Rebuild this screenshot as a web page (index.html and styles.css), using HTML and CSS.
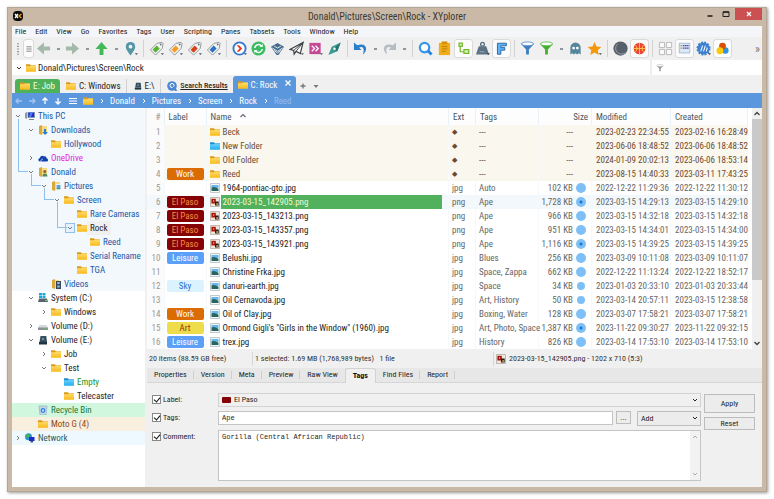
FILE: index.html
```html
<!DOCTYPE html>
<html lang="en">
<head>
<meta charset="utf-8">
<title>Donald\Pictures\Screen\Rock - XYplorer</title>
<link rel="stylesheet" href="styles.css">
</head>
<body>
<svg class="defs" aria-hidden="true">
  <defs>
    <linearGradient id="gold" x1="0" y1="0" x2="0" y2="1"><stop offset="0" stop-color="#ffdd72"/><stop offset="1" stop-color="#f9b916"/></linearGradient>
    <linearGradient id="sky" x1="0" y1="0" x2="0" y2="1"><stop offset="0" stop-color="#6fd2ff"/><stop offset="1" stop-color="#23aef3"/></linearGradient>
    <symbol id="folder" viewBox="0 0 10 10"><path d="M0 1.2h3.8l1 1H10V4H0z" fill="#dc9a1a"/><path d="M0 3.2h4l1-.8h5v6.4H0z" fill="url(#gold)"/></symbol>
    <symbol id="folder-blue" viewBox="0 0 10 10"><path d="M0 1.2h3.8l1 1H10V4H0z" fill="#1d8fd0"/><path d="M0 3.2h4l1-.8h5v6.4H0z" fill="url(#sky)"/></symbol>
    <symbol id="chev-down" viewBox="0 0 8 8"><path d="M2 3l2 2 2-2" fill="none" stroke="currentColor"/></symbol>
    <symbol id="chev-right" viewBox="0 0 8 8"><path d="M3 2l2 2-2 2" fill="none" stroke="currentColor"/></symbol>
    <symbol id="pc" viewBox="0 0 10 10"><path d="M0 2l2-1v7L0 7z" fill="#8d99a8"/><path d="M2.500 1H10v6H2.500z" fill="#9aa6b4"/><path d="M3.200 1.600h6v4.500h-6z" fill="#1a2fc0"/><path d="M5 1.600h3L6 6H4z" fill="#4f7af0"/><path d="M4 8h5v1H4z" fill="#7d8792"/></symbol>
    <symbol id="downloads" viewBox="0 0 10 10"><path d="M1 1l3-1v10L1 9z" fill="#dba93a"/><path d="M4 1h5v8H4z" fill="#f6d983"/><path d="M6 4h2v3h2L7 10 4.500 7H6z" fill="#1d83d8"/></symbol>
    <symbol id="user-folder" viewBox="0 0 10 10"><path d="M1 1l3-1v10L1 9z" fill="#dba93a"/><path d="M4 1h5v8H4z" fill="#f6d983"/><circle cx="6.800" cy="4.500" r="1.600" fill="#8c6a3c"/><path d="M4.500 9.500q0-3 2.400-3t2.600 3z" fill="#4d8a63"/></symbol>
    <symbol id="pictures" viewBox="0 0 10 10"><path d="M1 1l3-1v10L1 9z" fill="#dba93a"/><path d="M4 1h5v8H4z" fill="#f6d983"/><path d="M5 3h5v6H5z" fill="#e8f4fb"/><path d="M5.600 4h3.800v3H5.600z" fill="#5aa5dc"/><path d="M5.600 7h3.800v1.200H5.600z" fill="#5d8f5a"/></symbol>
    <symbol id="videos" viewBox="0 0 10 10"><path d="M1 1l3-1v10L1 9z" fill="#dba93a"/><path d="M4 1h4v8H4z" fill="#f6d983"/><path d="M5 2h5v8H5z" fill="#39495e"/><path d="M6.300 3h2.400v2H6.300zm0 3.500h2.400v2H6.300z" fill="#8cc3e8"/></symbol>
    <symbol id="cloud" viewBox="0 0 10 10"><path d="M1.500 8.500C-.5 7.500.5 5 2 5c.3-2 2.500-3 4-1.500C7.600 3 8.500 4 8.500 5.200 10.500 5.500 10.400 8.500 9 8.500z" fill="#1243ac"/><path d="M3.500 9C2 8 3.500 6 4.800 6.200" fill="none" stroke="#f3f8fd" stroke-width=".7"/></symbol>
    <symbol id="drive-c" viewBox="0 0 10 10"><path d="M1 0h3v2.200H1zm3.500 0h3v2.200h-3zM1 2.700h3v2.200H1zm3.500 0h3v2.200h-3z" fill="#19a9dd"/><path d="M1 5.500h8l1 3.500H0z" fill="#56636c"/><path d="M7 7h2v1H7z" fill="#6fd85a"/></symbol>
    <symbol id="drive" viewBox="0 0 10 10"><path d="M1.500 4h7L10 7H0z" fill="#d5d9dc"/><path d="M0 6.500h10V9H0z" fill="#8b9297"/><path d="M7 7.300h2v1H7z" fill="#5dcc48"/></symbol>
    <symbol id="usb" viewBox="0 0 10 10"><path d="M2.500 1h5.800L9 7H1.500z" fill="#36505f"/><path d="M1 7h8v2.500H1z" fill="#1d3442"/><path d="M4 3h2v2H4z" fill="#77909e"/></symbol>
    <symbol id="bin" viewBox="0 0 10 10"><path d="M1 1h8L8 10H2z" fill="#c4d9e8" stroke="#8ba6ba" stroke-width=".6"/><circle cx="5" cy="5.500" r="1.800" fill="none" stroke="#2a7fe0" stroke-width="1.200"/></symbol>
    <symbol id="network" viewBox="0 0 10 10"><circle cx="3.500" cy="3.800" r="3.500" fill="#2c93cf"/><path d="M1 2q2-2 3 0T2 5z" fill="#47b64c"/><path d="M4 4h5.500v4H4z" fill="#1d2fc2"/><path d="M5.500 8h2.500v1.500H5.500z" fill="#45546b"/></symbol>
    <symbol id="jpg" viewBox="0 0 10 10"><path d="M.5.500h9v9h-9z" fill="#f4f6f7" stroke="#b4bcc3" stroke-width=".8"/><path d="M1.500 2h7v3h-7z" fill="#6ab8ea"/><path d="M1.500 4.500q3-1.500 7 1.200V8h-7z" fill="#27665f"/></symbol>
    <symbol id="png" viewBox="0 0 10 10"><path d="M.5.500h9v9h-9z" fill="#eee6da" stroke="#b4aaa0" stroke-width=".8"/><path d="M1.400 1.800h4.400v4.700H1.400z" fill="#ab1210"/><path d="M5 4.500h3.700v4H5z" fill="#23202a"/><path d="M3 3.300h1.200v1.400H3zm3.300 3h1.700v1.500H6.300z" fill="#f4b41c"/></symbol>
    <symbol id="tag" viewBox="0 0 16 16"><path d="M8.500 2.500L14 1.500l1 1-1 5.500-7 7-5.500-5.500z" fill="#f4f5f5" stroke="#8b9196"/><path d="M8.200 4.800l3.200 3.200-4.400 4.400-3.200-3.200z" fill="currentColor"/><circle cx="12.500" cy="3.700" r="1" fill="#6d7478"/><path d="M12.500 13h3.500l-1.700 2z" fill="#4d5b68"/></symbol>
    <symbol id="funnel" viewBox="0 0 16 16"><path d="M1 3h14l-5.500 6v5.500h-3V9z" fill="currentColor"/><ellipse cx="8" cy="3" rx="6.500" ry="2" fill="#fff" stroke="currentColor" stroke-width=".8"/></symbol>
    <symbol id="arrow-left" viewBox="0 0 16 16"><path d="M1 8l7.500-6.500v4.400H15v4.200H8.500v4.400z" fill="currentColor"/></symbol>
    <symbol id="thin-arrow" viewBox="0 0 10 10"><path d="M8 5H2M4.500 2.500L2 5l2.500 2.500" fill="none" stroke="currentColor" stroke-width="1.300"/></symbol>
  </defs>
</svg>

<div class="window">
  <header class="titlebar">
    <svg class="app" viewBox="0 0 12 10"><rect x="1" y="0" width="10" height="10" rx="4" fill="#090909"/><path d="M3 3l3 4M6 3L3 7" stroke="#fff" stroke-width="1.400"/><path d="M9.500 3L7 5l2.500 2" fill="none" stroke="#f6a11c" stroke-width="1.300"/></svg>
    <h1>Donald\Pictures\Screen\Rock - XYplorer</h1>
    <div class="caption">
      <button aria-label="Minimize"><svg viewBox="0 0 8 8"><path d="M1.500 6h5" stroke="#222" stroke-width="1.600"/></svg></button>
      <button aria-label="Maximize"><svg viewBox="0 0 8 8"><path d="M1 2h6v4.500H1z" fill="none" stroke="#222"/><path d="M1 2h6" stroke="#222" stroke-width="1.500"/></svg></button>
      <button class="close" aria-label="Close"><svg viewBox="0 0 8 8"><path d="M2 2l4 4M6 2L2 6" stroke="#fff" stroke-width="1.200"/></svg></button>
    </div>
  </header>

  <nav class="menu" aria-label="Menu">
    <button>File</button><button>Edit</button><button>View</button><button>Go</button><button>Favorites</button><button>Tags</button><button>User</button><button>Scripting</button><button>Panes</button><button>Tabsets</button><button>Tools</button><button>Window</button><button>Help</button>
  </nav>

  <div class="toolbar" role="toolbar" aria-label="Tools">
    <svg class="grip" viewBox="0 0 4 16"><path d="M1 2h2M1 5h2M1 8h2M1 11h2M1 14h2" stroke="#8a8a8a" stroke-width="1.200"/></svg>
    <button class="slim on" aria-label="Toolbar menu"><svg viewBox="0 0 8 16"><path d="M1 5.500h6M1 8h6M1 10.500h6" stroke="#7a7a7a"/></svg></button>
    <button class="tool sage" aria-label="Back"><svg><use href="#arrow-left"/></svg></button>
    <button class="drop" aria-label="Back history"></button>
    <button class="tool sage flip" aria-label="Forward"><svg><use href="#arrow-left"/></svg></button>
    <button class="drop" aria-label="Forward history"></button>
    <button class="tool green up" aria-label="Up"><svg><use href="#arrow-left"/></svg></button>
    <button class="drop" aria-label="Up history"></button>
    <button class="tool" aria-label="Hotlist"><svg viewBox="0 0 16 16"><path d="M8 15.500C4 10 3 8 3 6a5 5 0 0 1 10 0c0 2-1 4-5 9.500z" fill="#5595a5"/><circle cx="8" cy="6" r="2" fill="#f0f0f0"/><path d="M12.500 13H16l-1.700 2z" fill="#4d5b68"/></svg></button>
    <i class="sep"></i>
    <button class="tool tag-green" aria-label="Green tag"><svg><use href="#tag"/></svg></button>
    <button class="tool tag-orange" aria-label="Orange tag"><svg><use href="#tag"/></svg></button>
    <button class="tool tag-red" aria-label="Red tag"><svg><use href="#tag"/></svg></button>
    <button class="tool tag-blue" aria-label="Blue tag"><svg><use href="#tag"/></svg></button>
    <i class="sep"></i>
    <button class="tool" aria-label="Go to"><svg viewBox="0 0 16 16"><circle cx="8" cy="8" r="6.500" fill="#fff" stroke="#3779d0" stroke-width="2"/><path d="M5 4.500h2.500L11 8l-3.500 3.500H5L8 8z" fill="#ee382b"/><path d="M12.500 13H16l-1.700 2z" fill="#3f5668"/></svg></button>
    <button class="tool" aria-label="Refresh"><svg viewBox="0 0 16 16"><circle cx="8" cy="8" r="7.500" fill="#39bd62"/><path d="M4 7.500a4 4 0 0 1 7-2.300M12 8.500a4 4 0 0 1-7 2.300" fill="none" stroke="#fff" stroke-width="1.600"/><path d="M12.500 3v3.500H9zM3.500 13V9.500H7z" fill="#fff"/></svg></button>
    <button class="tool" aria-label="Layers"><svg viewBox="0 0 16 16"><path d="M1 6l7-4 7 4-6 9-2 0z" fill="#466b8d"/><path d="M2.500 7.500L8 11l5.500-3.500M4 10l4 2.700 4-2.700M4.500 5.500l3.500 2 3.500-2" fill="none" stroke="#fff" stroke-width=".9"/></svg></button>
    <button class="tool" aria-label="Send to"><svg viewBox="0 0 16 16"><path d="M1 9L15 1.500 12 13.500 7.500 11 5.500 14 5 10z" fill="#fff" stroke="#3c4145" stroke-width="1.300"/><path d="M5 10l10-8.500L7.500 11" fill="none" stroke="#3c4145"/><path d="M12.500 13H16l-1.700 2z" fill="#4d5b68"/></svg></button>
    <button class="tool" aria-label="Run script"><svg viewBox="0 0 16 16"><path d="M1.500 2h12v12h-12z" fill="#c44a96"/><path d="M4 5l3 3-3 3M8 5l3 3-3 3" fill="none" stroke="#fff" stroke-width="1.400"/><path d="M12.500 13H16l-1.700 2z" fill="#4d5b68"/></svg></button>
    <button class="tool" aria-label="Navigate"><svg viewBox="0 0 16 16"><path d="M14.500 1.500L11 11 1.500 15 5 6z" fill="#3d9a92"/><path d="M14.500 1.500L11 11 7 8z" fill="#28746f"/><circle cx="8" cy="8.300" r="1.300" fill="#fff"/></svg></button>
    <i class="sep"></i>
    <button class="tool" aria-label="Undo"><svg viewBox="0 0 16 16"><path d="M1 1.500v8h8L6.500 7C10 5 13 7.500 10.500 14.500 17 9 14 1 4.500 4.500z" fill="#2b7fca"/></svg></button>
    <button class="drop" aria-label="Undo history"></button>
    <button class="tool flip" aria-label="Redo"><svg viewBox="0 0 16 16"><path d="M1 1.500v8h8L6.500 7C10 5 13 7.500 10.500 14.500 17 9 14 1 4.500 4.500z" fill="#b4bdc4"/></svg></button>
    <button class="drop" aria-label="Redo history"></button>
    <i class="sep"></i>
    <button class="tool" aria-label="Find"><svg viewBox="0 0 16 16"><circle cx="7" cy="7" r="5" fill="#fff" stroke="#3596ea" stroke-width="2.400"/><path d="M10.500 10.500l4 4" stroke="#2b83dc" stroke-width="3"/></svg></button>
    <button class="tool" aria-label="Paste"><svg viewBox="0 0 16 16"><path d="M2 2h12v13H2z" fill="#f2ae16"/><path d="M5 .500h6v3H5z" fill="#d58d0c"/><path d="M5 6h6M5 8.500h6M5 11h4" stroke="#b97a0c"/></svg></button>
    <button class="tool on" aria-label="Tree"><svg viewBox="0 0 16 16"><path d="M4 6v6h5" fill="none" stroke="#74b82d" stroke-width="1.500"/><path d="M2.500 1.500h4v4h-4zM8.500 9.500h6v4.500h-6z" fill="#d8f0b8" stroke="#74b82d" stroke-width="1.500"/></svg></button>
    <button class="tool" aria-label="Weight"><svg viewBox="0 0 16 16"><circle cx="8" cy="3.500" r="2" fill="none" stroke="#566b7b" stroke-width="1.400"/><path d="M4 5.500h8l3 9H1z" fill="#5d7384"/><path d="M5 11.500h5" stroke="#9fb0bc"/><path d="M12.500 13H16l-1.700 2z" fill="#34424e"/></svg></button>
    <button class="tool on" aria-label="Font filter"><svg viewBox="0 0 16 16"><path d="M3 1.500h11v3.200H7.200v2.200H12V10H7.200v5H3z" fill="#5fb4f5" stroke="#245f9e" stroke-width="1.100"/></svg></button>
    <i class="sep"></i>
    <button class="tool funnel-blue" aria-label="Filter"><svg><use href="#funnel"/></svg></button>
    <button class="tool funnel-green" aria-label="Visual filter"><svg><use href="#funnel"/></svg></button>
    <button class="drop" aria-label="Filter list"></button>
    <button class="tool" aria-label="Ghost filter"><svg viewBox="0 0 16 16"><path d="M2.500 14.500V7a5.500 5.500 0 0 1 11 0v7.500l-2-1.500-1.700 1.500L8 13l-1.800 1.500L4.500 13z" fill="#55869b"/><circle cx="6" cy="7.500" r="1.500" fill="#fff"/><circle cx="10" cy="7.500" r="1.500" fill="#fff"/></svg></button>
    <button class="tool" aria-label="Favorites"><svg viewBox="0 0 16 16"><path d="M8 1l2.100 4.800 5.200.5-3.900 3.500 1.100 5.100L8 12.200l-4.500 2.700 1.100-5.100L.7 6.300l5.200-.5z" fill="#f59709"/><path d="M12.500 13H16l-1.700 2z" fill="#4d5b68"/></svg></button>
    <i class="sep"></i>
    <button class="tool" aria-label="Dark mode"><svg viewBox="0 0 16 16"><circle cx="8" cy="8" r="7.600" fill="#56616c"/><path d="M5 3A6.200 6.200 0 0 0 13 12.500" fill="none" stroke="#aab2b9" stroke-width=".8"/></svg></button>
    <button class="tool on" aria-label="Dribble"><svg viewBox="0 0 16 16"><circle cx="8" cy="8" r="7.200" fill="#e8482f"/><path d="M8 1v14M1 8h14M3 4q4 4 0 8M13 4q-4 4 0 8" fill="none" stroke="#ffc14a" stroke-width="1.200"/></svg></button>
    <i class="sep"></i>
    <button class="tool" aria-label="Dual pane"><svg viewBox="0 0 16 16"><path d="M1.500 1.500h5.500v5.500H1.500zM9 1.500h5.500v5.500H9zM1.500 9h5.500v5.500H1.500zM9 9h5.500v5.500H9z" fill="#fafafa" stroke="#b8b8b8"/></svg></button>
    <button class="tool on" aria-label="Details"><svg viewBox="0 0 16 16"><path d="M1.500 1.500h13v12h-13z" fill="#dbe8f8" stroke="#9ab0cc"/><path d="M3 4.500h2M3 7.500h2" stroke="#c79b35" stroke-width="1.500"/><path d="M6 4.500h7M6 7.500h7" stroke="#4547a2" stroke-width="1.500" stroke-dasharray="2 .6"/></svg></button>
    <button class="tool" aria-label="Badge"><svg viewBox="0 0 16 16"><circle cx="8" cy="8" r="6.500" fill="#3c81cf" stroke="#3c81cf" stroke-width="2" stroke-dasharray="2 1.400"/><path d="M5 11l2-6M8 11l2-6M11 11l1-4" stroke="#fff" stroke-width="1.100"/><path d="M12.500 13H16l-1.700 2z" fill="#34424e"/></svg></button>
    <button class="tool on" aria-label="Colors"><svg viewBox="0 0 16 16"><circle cx="11.500" cy="10.500" r="4" fill="#2a94dc"/><circle cx="8" cy="5" r="4.200" fill="#d64d08"/><circle cx="4.800" cy="10.800" r="4.200" fill="#fdc80a"/></svg></button>
    <button class="more" aria-label="More">»</button>
  </div>

  <div class="address">
    <button aria-label="Address history"><svg class="i8"><use href="#chev-down"/></svg></button>
    <svg class="i10"><use href="#folder"/></svg>
    <input class="path" aria-label="Address" value="Donald\Pictures\Screen\Rock">
    <label class="live"><svg class="i8"><use href="#funnel"/></svg><input aria-label="Live filter"></label>
  </div>

  <div class="tabs">
    <button class="tab job"><svg class="i10"><use href="#folder"/></svg>E: Job</button>
    <button class="tab"><svg class="i10"><use href="#folder"/></svg>C: Windows</button>
    <button class="tab drive"><svg class="i8"><use href="#usb"/></svg>E:\</button>
    <button class="tab search"><svg class="i10" viewBox="0 0 10 10"><circle cx="5" cy="5" r="4.800" fill="#4a88d3"/><circle cx="5" cy="4.500" r="2" fill="none" stroke="#fff"/><path d="M6 6l3.500 4" stroke="#4a88d3" stroke-width="2"/></svg><span>Search Results</span></button>
    <button class="tab current"><svg class="i10"><use href="#folder"/></svg>C: Rock<svg class="x" viewBox="0 0 8 8"><path d="M1.500 1.500l5 5M6.500 1.500l-5 5" stroke="#fff" stroke-width="1.300"/></svg></button>
    <button class="plain" aria-label="New tab"><svg class="i8" viewBox="0 0 8 8"><path d="M4 1.500v5M1.500 4h5" stroke="#777" stroke-width="1.300"/></svg></button>
    <button class="plain" aria-label="Tab list"><svg class="i8" viewBox="0 0 8 8"><path d="M1.500 3h5L4 6z" fill="#777"/></svg></button>
  </div>

  <nav class="crumbs" aria-label="Breadcrumb">
    <button class="dim" aria-label="Back"><svg class="i10"><use href="#thin-arrow"/></svg></button>
    <button class="dim flip" aria-label="Forward"><svg class="i10"><use href="#thin-arrow"/></svg></button>
    <button class="up" aria-label="Up"><svg class="i10"><use href="#thin-arrow"/></svg></button>
    <button class="down" aria-label="Down"><svg class="i10"><use href="#thin-arrow"/></svg></button>
    <button class="burger" aria-label="Menu"><svg class="i8" viewBox="0 0 8 8"><path d="M0 1.500h8M0 4h8M0 6.500h8" stroke="#fff"/></svg></button>
    <svg class="i10"><use href="#folder"/></svg>
    <svg class="next"><use href="#chev-right"/></svg><a href="#">Donald</a>
    <svg class="next"><use href="#chev-right"/></svg><a href="#">Pictures</a>
    <svg class="next"><use href="#chev-right"/></svg><a href="#">Screen</a>
    <svg class="next"><use href="#chev-right"/></svg><a href="#">Rock</a>
    <svg class="next"><use href="#chev-right"/></svg><a class="faint" href="#">Reed</a>
  </nav>

  <div class="main">
    <ul class="tree">
      <li class="b"><svg class="c"><use href="#chev-down"/></svg><svg class="i10"><use href="#pc"/></svg>This PC</li>
      <li class="b d1"><svg class="c"><use href="#chev-down"/></svg><svg class="i10"><use href="#downloads"/></svg>Downloads</li>
      <li class="b d2"><i class="c"></i><svg class="i10"><use href="#folder"/></svg>Hollywood</li>
      <li class="b d1 magenta"><svg class="c"><use href="#chev-right"/></svg><svg class="i10"><use href="#cloud"/></svg>OneDrive</li>
      <li class="b d1 link4"><svg class="c"><use href="#chev-down"/></svg><svg class="i10"><use href="#user-folder"/></svg>Donald</li>
      <li class="b d2 link1"><svg class="c"><use href="#chev-down"/></svg><svg class="i10"><use href="#pictures"/></svg>Pictures</li>
      <li class="b d3 link1"><svg class="c"><use href="#chev-down"/></svg><svg class="i10"><use href="#folder"/></svg>Screen</li>
      <li class="b d4"><i class="c"></i><svg class="i10"><use href="#folder"/></svg>Rare Cameras</li>
      <li class="b d4 link2 here"><svg class="c"><use href="#chev-down"/></svg><svg class="i10"><use href="#folder"/></svg><span>Rock</span></li>
      <li class="b d5"><i class="c"></i><svg class="i10"><use href="#folder"/></svg>Reed</li>
      <li class="b d4"><i class="c"></i><svg class="i10"><use href="#folder"/></svg>Serial Rename</li>
      <li class="b d4"><i class="c"></i><svg class="i10"><use href="#folder"/></svg>TGA</li>
      <li class="b d2"><i class="c"></i><svg class="i10"><use href="#videos"/></svg>Videos</li>
      <li class="d1"><svg class="c"><use href="#chev-down"/></svg><svg class="i10"><use href="#drive-c"/></svg>System (C:)</li>
      <li class="d2"><svg class="c"><use href="#chev-right"/></svg><svg class="i10"><use href="#folder"/></svg>Windows</li>
      <li class="d1"><svg class="c"><use href="#chev-right"/></svg><svg class="i10"><use href="#drive"/></svg>Volume (D:)</li>
      <li class="d1"><svg class="c"><use href="#chev-down"/></svg><svg class="i10"><use href="#usb"/></svg>Volume (E:)</li>
      <li class="d2"><svg class="c"><use href="#chev-right"/></svg><svg class="i10"><use href="#folder"/></svg>Job</li>
      <li class="d2"><svg class="c"><use href="#chev-down"/></svg><svg class="i10"><use href="#folder"/></svg>Test</li>
      <li class="d3 lime"><i class="c"></i><svg class="i10"><use href="#folder-blue"/></svg>Empty</li>
      <li class="d3"><i class="c"></i><svg class="i10"><use href="#folder"/></svg>Telecaster</li>
      <li class="d1 recycle"><i class="c"></i><svg class="i10"><use href="#bin"/></svg>Recycle Bin</li>
      <li class="d1 moto"><i class="c"></i><svg class="i10"><use href="#folder"/></svg>Moto G (4)</li>
      <li class="net"><svg class="c"><use href="#chev-right"/></svg><svg class="i10"><use href="#network"/></svg>Network</li>
    </ul>

    <section class="work">
      <div class="list">
        <table>
          <colgroup><col class="w-num"><col class="w-label"><col><col class="w-ext"><col class="w-tags"><col class="w-size"><col class="w-mod"><col class="w-cre"></colgroup>
          <thead><tr><th class="num">#</th><th>Label</th><th>Name <svg class="i8 sort" viewBox="0 0 8 8"><path d="M1.500 5L4 2.500 6.500 5" fill="none" stroke="#667" stroke-width="1.200"/></svg></th><th>Ext</th><th>Tags</th><th class="size">Size</th><th>Modified</th><th>Created</th></tr></thead>
          <tbody>
            <tr class="dir"><td class="num">1</td><td></td><td class="name"><svg><use href="#folder"/></svg><span>Beck</span></td><td class="mark">◆</td><td>---</td><td class="size">---<i></i></td><td class="date">2023-02-23 22:34:55</td><td class="date">2023-02-16 16:28:49</td></tr>
            <tr class="dir"><td class="num">2</td><td></td><td class="name"><svg><use href="#folder-blue"/></svg><span>New Folder</span></td><td class="mark">◆</td><td>---</td><td class="size">---<i></i></td><td class="date">2023-06-06 18:48:52</td><td class="date">2023-06-06 18:48:52</td></tr>
            <tr class="dir"><td class="num">3</td><td></td><td class="name"><svg><use href="#folder"/></svg><span>Old Folder</span></td><td class="mark">◆</td><td>---</td><td class="size">---<i></i></td><td class="date">2024-01-09 20:02:13</td><td class="date">2023-06-06 18:53:14</td></tr>
            <tr class="dir"><td class="num">4</td><td><b class="pill work-p">Work</b></td><td class="name"><svg><use href="#folder"/></svg><span>Reed</span></td><td class="mark">◆</td><td>---</td><td class="size">---<i></i></td><td class="date">2023-08-15 14:40:33</td><td class="date">2023-03-11 17:43:25</td></tr>
            <tr><td class="num">5</td><td></td><td class="name"><svg><use href="#jpg"/></svg><span>1964-pontiac-gto.jpg</span></td><td>jpg</td><td>Auto</td><td class="size">102 KB<i class="dot"></i></td><td class="date">2022-12-22 11:29:36</td><td class="date">2022-12-22 11:30:12</td></tr>
            <tr class="sel"><td class="num">6</td><td><b class="pill paso">El Paso</b></td><td class="name"><svg><use href="#png"/></svg><span>2023-03-15_142905.png</span></td><td>png</td><td>Ape</td><td class="size">1,728 KB<i class="dot big"></i></td><td class="date">2023-03-15 14:29:13</td><td class="date">2023-03-15 14:29:10</td></tr>
            <tr><td class="num">7</td><td><b class="pill paso">El Paso</b></td><td class="name"><svg><use href="#png"/></svg><span>2023-03-15_143213.png</span></td><td>png</td><td>Ape</td><td class="size">966 KB<i class="dot"></i></td><td class="date">2023-03-15 14:32:18</td><td class="date">2023-03-15 14:32:18</td></tr>
            <tr><td class="num">8</td><td><b class="pill paso">El Paso</b></td><td class="name"><svg><use href="#png"/></svg><span>2023-03-15_143357.png</span></td><td>png</td><td>Ape</td><td class="size">951 KB<i class="dot"></i></td><td class="date">2023-03-15 14:34:01</td><td class="date">2023-03-15 14:34:00</td></tr>
            <tr><td class="num">9</td><td><b class="pill paso">El Paso</b></td><td class="name"><svg><use href="#png"/></svg><span>2023-03-15_143921.png</span></td><td>png</td><td>Ape</td><td class="size">1,116 KB<i class="dot big"></i></td><td class="date">2023-03-15 14:39:25</td><td class="date">2023-03-15 14:39:25</td></tr>
            <tr><td class="num">10</td><td><b class="pill leisure">Leisure</b></td><td class="name"><svg><use href="#jpg"/></svg><span>Belushi.jpg</span></td><td>jpg</td><td>Blues</td><td class="size">256 KB<i class="dot"></i></td><td class="date">2023-03-09 10:11:08</td><td class="date">2023-03-09 10:11:07</td></tr>
            <tr><td class="num">11</td><td></td><td class="name"><svg><use href="#jpg"/></svg><span>Christine Frka.jpg</span></td><td>jpg</td><td>Space, Zappa</td><td class="size">662 KB<i class="dot"></i></td><td class="date">2022-12-22 11:13:24</td><td class="date">2022-12-22 18:52:17</td></tr>
            <tr><td class="num">12</td><td><b class="pill sky">Sky</b></td><td class="name"><svg><use href="#jpg"/></svg><span>danuri-earth.jpg</span></td><td>jpg</td><td>Space</td><td class="size">34 KB<i class="dot small"></i></td><td class="date">2023-01-03 20:33:10</td><td class="date">2023-01-03 20:33:44</td></tr>
            <tr><td class="num">13</td><td></td><td class="name"><svg><use href="#jpg"/></svg><span>Oil Cernavoda.jpg</span></td><td>jpg</td><td>Art, History</td><td class="size">50 KB<i class="dot small"></i></td><td class="date">2023-03-14 20:57:11</td><td class="date">2023-03-15 12:38:58</td></tr>
            <tr><td class="num">14</td><td><b class="pill work-p">Work</b></td><td class="name"><svg><use href="#jpg"/></svg><span>Oil of Clay.jpg</span></td><td>jpg</td><td>Boxing, Water</td><td class="size">128 KB<i class="dot"></i></td><td class="date">2023-03-07 17:58:21</td><td class="date">2023-03-07 17:58:21</td></tr>
            <tr><td class="num">15</td><td><b class="pill art">Art</b></td><td class="name"><svg><use href="#jpg"/></svg><span>Ormond Gigli's "Girls in the Window" (1960).jpg</span></td><td>jpg</td><td>Art, Photo, Space</td><td class="size">1,387 KB<i class="dot big"></i></td><td class="date">2023-11-22 09:30:27</td><td class="date">2023-11-22 09:32:15</td></tr>
            <tr><td class="num">16</td><td><b class="pill leisure">Leisure</b></td><td class="name"><svg><use href="#jpg"/></svg><span>trex.jpg</span></td><td>jpg</td><td>History</td><td class="size">826 KB<i class="dot"></i></td><td class="date">2023-03-14 17:53:10</td><td class="date">2023-03-14 17:53:10</td></tr>
          </tbody>
        </table>
        <div class="scroll"><svg class="rot" viewBox="0 0 8 8"><path d="M1.500 3L4 5.500 6.500 3" fill="none" stroke="#444" stroke-width="1.400"/></svg><i></i><svg viewBox="0 0 8 8"><path d="M1.500 3L4 5.500 6.500 3" fill="none" stroke="#444" stroke-width="1.400"/></svg></div>
      </div>

      <footer class="status">
        <span class="s1">20 items (88.59 GB free)</span>
        <span class="s2">1 selected: 1.69 MB (1,768,989 bytes) &nbsp; 1 file</span>
        <span class="s3"><svg class="i10"><use href="#png"/></svg>2023-03-15_142905.png - 1202 x 710 (5:3)</span>
      </footer>

      <div class="ptabs">
        <button>Properties</button><button>Version</button><button>Meta</button><button>Preview</button><button class="last">Raw View</button><button class="active">Tags</button><button>Find Files</button><button>Report</button>
      </div>

      <form class="panel">
        <label class="check r1"><input type="checkbox" checked>Label:</label>
        <div class="combo r1"><i class="swatch"></i><select aria-label="Label value"><option>El Paso</option></select><svg class="i8"><use href="#chev-down"/></svg></div>
        <label class="check r2"><input type="checkbox" checked>Tags:</label>
        <div class="tagrow r2"><input aria-label="Tags value" value="Ape"><button type="button" class="dots">...</button><div class="combo add"><select aria-label="Tag mode"><option>Add</option></select><svg class="i8"><use href="#chev-down"/></svg></div></div>
        <label class="check r3"><input type="checkbox" checked>Comment:</label>
        <div class="note r3"><textarea aria-label="Comment text">Gorilla (Central African Republic)</textarea><div class="nscroll"><svg class="i8 rot"><use href="#chev-down"/></svg><svg class="i8"><use href="#chev-down"/></svg></div></div>
        <div class="actions"><button type="button" class="apply">Apply</button><button type="button">Reset</button></div>
      </form>
    </section>
  </div>
</div>
</body>
</html>
```
FILE: styles.css
```css
* { box-sizing: border-box; }

body {
  margin: 0;
  padding: 7px;
  background: #fff;
  color: #262626;
  font: 8px/14px "Roboto Condensed", Roboto, sans-serif;
}

button, input, select, textarea { font: inherit; color: inherit; margin: 0; }
button { padding: 0; border: 0; background: none; display: flex; align-items: center; justify-content: center; white-space: nowrap; }
svg { display: block; flex: none; }
a { color: inherit; text-decoration: none; }
.defs { position: absolute; width: 0; height: 0; }
.i8 { width: 8px; height: 8px; }
.i10 { width: 10px; height: 10px; }
.rot { transform: rotate(180deg); }
.flip svg { transform: scaleX(-1); }
.up svg { transform: rotate(90deg); }
.down svg { transform: rotate(-90deg); }

.window {
  display: flex;
  flex-direction: column;
  min-height: calc(100vh - 14px);
  padding: 0 4px 4px;
  background: #c9b9a6;
  border: 1px solid #b5a797;
  box-shadow: 1px 1px 3px #999;
}

/* Title bar and menu */
.titlebar { display: grid; grid-template-columns: 1fr auto 1fr; height: 18px; }
.app { width: 12px; height: 10px; margin: 3px 0 0; }
h1 { margin: 0; font-size: 10px; font-weight: 400; line-height: 18px; color: #3d3935; }
.caption { display: flex; justify-content: flex-end; height: 12px; }
.caption button { width: 16px; }
.caption svg { width: 8px; height: 8px; }
.caption .close { width: 27px; margin-left: 1px; background: #ca5051; }
.menu { display: flex; gap: 9px; height: 11px; padding: 0 3px; background: #f4f6f9; line-height: 11px; color: #222; }

/* Toolbar */
.toolbar { display: flex; align-items: center; height: 23px; background: #f0f0f0; }
.grip { width: 4px; height: 14px; margin: 0 3px 0 4px; }
.slim { width: 11px; height: 19px; }
.slim svg { width: 8px; height: 16px; }
.tool { width: 19px; height: 19px; }
.tool svg { width: 15px; height: 15px; }
.on { background: #fcfcfc; border: 1px solid #dadada; border-radius: 3px; }
.tool.on svg { width: 13px; height: 13px; }
.slim.on svg { width: 8px; height: 14px; }
.sage { color: #a3b9a9; }
.green { color: #45b95a; }
.drop { width: 10px; height: 19px; }
.drop::after { content: ""; width: 3px; height: 2px; background: #8d979d; }
.sep { width: 7px; height: 17px; background: linear-gradient(#d2d2d2, #d2d2d2) center / 1px 100% no-repeat; }
.tag-green { color: #58b534; }
.tag-orange { color: #f79b1f; }
.tag-red { color: #d8401a; }
.tag-blue { color: #2a72c4; }
.funnel-blue { color: #3f7fc0; }
.funnel-green { color: #46b031; }
.more { margin: 0 2px 0 auto; font-size: 12px; color: #777; }

/* Address bar */
.address { display: flex; align-items: center; height: 15px; background: #fff; }
.address button { width: 14px; color: #333; }
.path { flex: 1; min-width: 0; margin-left: 2px; padding: 0; border: 0; background: none; font-size: 9px; }
.live { display: flex; align-items: center; width: 112px; height: 15px; padding-left: 4px; border-left: 2px solid #eee; color: #9a9a9a; }
.live input { flex: 1; min-width: 0; height: 13px; border: 0; background: none; }

/* Folder tabs */
.tabs { display: flex; align-items: flex-end; height: 18px; padding-left: 3px; background: #f0f0f0; }
.tab { height: 14px; gap: 3px; padding: 0 6px; font-size: 9px; }
.job { width: 45px; background: #51b15b; color: #f8ffe0; border-radius: 3px 3px 0 0; }
.tab + .drive, .drive + .search { border-left: 1px solid #d2d2d2; background-clip: padding-box; }
.drive { width: 34px; }
.search { width: 73px; }
.search span { text-decoration: underline; font-size: 8px; font-weight: 500; }
.current { height: 17px; width: 63px; background: #5b97dd; color: #fff; border-radius: 3px 3px 0 0; padding: 0 4px; }
.x { width: 8px; height: 8px; margin: -4px 0 0 4px; }
.plain { width: 13px; height: 14px; }

.crumbs { display: flex; align-items: center; height: 15px; background: #5b97dd; color: #fff; font-size: 9px; }
.crumbs button { width: 13px; }
.crumbs .burger { width: 17px; margin-right: 2px; }
.crumbs .dim { color: #a2c6f0; }
.next { width: 8px; height: 8px; margin: 0 4px 0 5px; }
.faint { color: #92bdee; }

/* Folder tree */
.main { display: flex; flex: 1; }
.tree { flex: none; width: 133px; margin: 0; padding: 1px 0 0; list-style: none; background: #fff; }
.tree li { position: relative; display: flex; align-items: center; height: 14px; gap: 3px; font-size: 9px; white-space: nowrap; }
.tree .c { width: 8px; height: 8px; margin-left: 2px; color: #777; }
.tree .d1 { padding-left: 13px; }
.tree .d2 { padding-left: 26px; }
.tree .d3 { padding-left: 39px; }
.tree .d4 { padding-left: 52px; }
.tree .d5 { padding-left: 65px; }
.tree .b { background: #f3f8fd; color: #2157a5; }
.tree .magenta { color: #e01fdc; }
.tree .lime { color: #1d9320; }
.tree .recycle { background: #d1f7de; color: #1c7a33; }
.tree .moto { background: #f9efdf; color: #8b4715; }
.tree .net { background: #edf9ff; color: #2b5c62; }
[class*="link"]::before { content: ""; position: absolute; bottom: 7px; width: 9px; border: solid #8fc0ec; border-width: 0 0 1px 1px; }
.link4::before { left: 6px; height: 52px; }
.link1::before { height: 11px; }
.link2::before { left: 45px; height: 25px; }
.d2.link1::before { left: 19px; }
.d3.link1::before { left: 32px; }
.tree .here { color: #222; }
.here .c { outline: 1px solid #8fc0ec; background: #e5f2fd; }
.here span { padding: 0 3px; margin: 0 -3px; background: #f0f0f0; }

/* File list */
.work { flex: 1; min-width: 0; display: flex; flex-direction: column; padding-left: 2px; background: #f0f0f0; }
.list { display: flex; justify-content: space-between; background: #fff; }
table { width: calc(100% - 14px); table-layout: fixed; border-collapse: collapse; }
.w-num { width: 17px; }
.w-label { width: 42px; }
.w-ext { width: 27px; }
.w-tags { width: 63px; }
.w-size { width: 53px; }
.w-mod { width: 79px; }
.w-cre { width: 77px; }
th { height: 17px; padding: 0 0 0 4px; font-weight: 400; text-align: left; color: #4a5460; background: #fdfdfd; border-right: 1px solid #eaf2f8; }
th .sort { display: inline-block; margin-left: 6px; }
td { height: 14px; padding: 0 0 0 3px; color: #666; white-space: nowrap; border-right: 1px solid #f5f9fc; }
td.date { padding-left: 4px; }
th, td { font-size: 9px; line-height: 12px; }
.dir td { background: #faf7ef; color: #6b4a30; }
.dir .mark { font-size: 7px; }
tbody .num, th.num { padding: 0 3px 0 0; text-align: right; color: #999; background: #fbfbfb; }
td:nth-child(2) { padding: 0 2px; }
.name, .dir .name { padding: 0 6px 0 3px; }
.name span { display: block; overflow: hidden; padding-left: 2px; line-height: 14px; color: #222; }
.dir .name span { color: #6b4a30; }
.name svg { float: left; width: 10px; height: 10px; margin: 2px 1px 0 0; }
.sel td { background: #f3f8fc; }
.sel .name span { background: #52b15d; color: #f4fad0; }
th.size { padding-right: 3px; text-align: right; }
td.size { padding: 0 5px 0 0; text-align: right; }
.size i { display: inline-block; vertical-align: -2px; width: 10px; height: 10px; margin-left: 3px; border-radius: 50%; }
.size .dot { background: #7ec0f6; }
.size .big { background: radial-gradient(circle, #1c77cf 0 1px, #7ec0f6 2px); }
.size .small { width: 8px; height: 8px; margin: 0 1px 1px 4px; }
.pill { display: block; height: 12px; border-radius: 2px; font-weight: 400; text-align: center; }
.work-p { background: #db6c04; color: #fff; }
.paso { background: #850304; color: #ff8a42; }
.leisure { background: #5b9ff8; color: #fff; }
.sky { background: #dbf2ff; color: #2870d8; }
.art { background: #efdc4a; color: #8e3710; }
.scroll { display: flex; flex-direction: column; align-items: center; width: 10px; padding: 2px 0; background: #f0f0f0; }
.scroll svg { width: 8px; height: 8px; }
.scroll i { width: 10px; height: 68%; margin: 1px 0 auto; background: #c9c9c9; }

/* Status line and info panel */
.status { display: grid; grid-template-columns: 105px 241px 1fr; align-items: center; height: 19px; color: #333; }
.status span { display: flex; align-items: center; gap: 3px; padding-left: 2px; white-space: pre; }
.s2, .s3 { border-left: 1px solid #d6d6d6; }
.ptabs { display: flex; height: 15px; background: #e7e7e7; border-bottom: 1px solid #d6d6d6; font-size: 8px; }
.ptabs button { padding: 0 7px; background: linear-gradient(#cfcfcf, #cfcfcf) right / 1px 8px no-repeat; }
.ptabs .last { background: none; }
.ptabs .active { height: 15px; background: #f0f0f0; border: solid #d2d2d2; border-width: 1px 1px 0; border-radius: 3px 3px 0 0; font-weight: 700; color: #111; }

.panel {
  flex: 1;
  display: grid;
  grid-template-columns: 63px 1fr 51px;
  grid-template-rows: 14px 15px 1fr;
  gap: 4px 3px;
  padding: 10px 7px 6px 5px;
}
.check { grid-column: 1; display: flex; align-items: flex-start; gap: 2px; font-size: 8px; }
.check input { position: relative; appearance: none; width: 9px; height: 9px; margin-top: 2px; border: 1px solid #888; background: #fff; }
.check input:checked::after { content: ""; position: absolute; left: 2px; top: 0; width: 3px; height: 5px; border: solid #111; border-width: 0 1px 1px 0; transform: rotate(40deg); }
.r1, .r2, .r3 { min-width: 0; }
.combo { position: relative; display: flex; grid-column: 2; border: 1px solid #d2d2d2; }
.combo select { flex: 1; min-width: 0; appearance: none; padding: 0 0 0 3px; border: 0; background: none; line-height: 12px; }
.combo svg { position: absolute; right: 1px; top: 2px; color: #222; pointer-events: none; }
.swatch { width: 9px; height: 6px; margin: 3px 0 0 3px; border-radius: 1px; background: #850304; }
.tagrow { grid-column: 2; display: flex; }
.tagrow input { flex: 1; min-width: 0; height: 14px; padding: 0 3px; border: 1px solid #c4c4c4; background: #fff; font: 7px/12px "Liberation Mono", monospace; }
.dots { width: 15px; height: 13px; margin: 0 6px 0 3px; background: #ececec; border: 1px solid #bdbdbd; }
.add { width: 64px; background: #ececec; border-color: #bdbdbd; }
.note { grid-column: 2; display: flex; border: 1px solid #c4c4c4; background: #fff; }
textarea { flex: 1; min-width: 0; height: auto; padding: 1px 3px; border: 0; background: none; resize: none; font: 7px/10px "Liberation Mono", monospace; }
.nscroll { display: flex; flex-direction: column; justify-content: space-between; padding: 2px 1px; background: #f2f2f2; color: #aaa; }
.actions { grid-column: 3; grid-row: 1 / 4; display: flex; flex-direction: column; gap: 4px; padding-top: 1px; }
.actions button { height: 13px; border: 1px solid #bcbcbc; background: #ececec; font-size: 8px; }
.actions .apply { height: 19px; }
```
